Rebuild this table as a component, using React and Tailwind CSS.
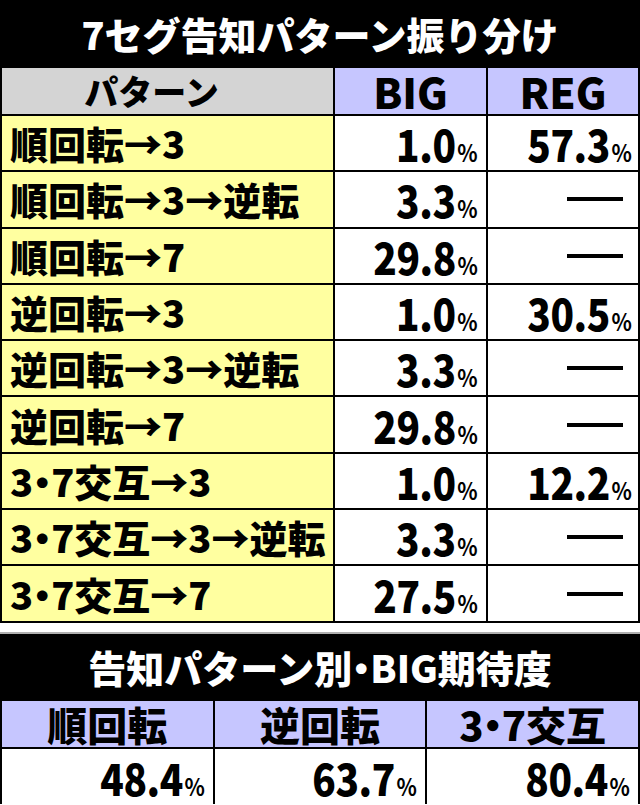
import React from "react";

const rows = [
  { label: "順回転→3", big: "1.0", reg: "57.3" },
  { label: "順回転→3→逆転", big: "3.3", reg: null },
  { label: "順回転→7", big: "29.8", reg: null },
  { label: "逆回転→3", big: "1.0", reg: "30.5" },
  { label: "逆回転→3→逆転", big: "3.3", reg: null },
  { label: "逆回転→7", big: "29.8", reg: null },
  { label: "3・7交互→3", big: "1.0", reg: "12.2" },
  { label: "3・7交互→3→逆転", big: "3.3", reg: null },
  { label: "3・7交互→7", big: "27.5", reg: null },
];

const expect = [
  { label: "順回転", value: "48.4" },
  { label: "逆回転", value: "63.7" },
  { label: "3・7交互", value: "80.4" },
];

// 中黒は幅を詰めて表示
function Dot() {
  return <span className="inline-flex w-[18px] justify-center overflow-hidden">・</span>;
}

function Label({ text }) {
  const parts = text.split("・");
  if (parts.length === 1) return text;
  return (
    <>
      {parts[0]}
      <Dot />
      {parts[1]}
    </>
  );
}

function Percent({ value }) {
  return (
    <span className="flex items-baseline leading-none origin-right scale-x-[0.88]">
      <span className="text-[44px] font-black tracking-[-0.5px]">{value}</span>
      <span className="text-[24px] font-bold ml-[2px]">%</span>
    </span>
  );
}

function Dash() {
  return <div className="w-[56px] h-[4px] bg-black" />;
}

export default function App() {
  return (
    <div
      className="w-[640px] h-[805px] bg-white overflow-hidden text-black"
      style={{ fontFamily: '"Noto Sans CJK JP", "Noto Sans", sans-serif' }}
    >
      {/* タイトル */}
      <div className="h-[68px] bg-black flex items-center justify-center text-white text-[38px] font-black leading-none">
        7セグ告知パターン振り分け
      </div>

      {/* 振り分け表 */}
      <div className="grid grid-cols-[331px_151px_1fr] gap-[2px] bg-black px-[2px] pb-[2px]">
        <div className="h-[46px] bg-[#d4d4d4] flex items-center justify-center pr-8 text-[34px] font-black leading-none">
          パターン
        </div>
        <div className="h-[46px] bg-[#c6c6ff] flex items-center justify-center text-[42px] font-black leading-none">
          BIG
        </div>
        <div className="h-[46px] bg-[#c6c6ff] flex items-center justify-center text-[42px] font-black leading-none">
          REG
        </div>

        {rows.map((r) => (
          <React.Fragment key={r.label}>
            <div className="h-[54.3px] bg-[#ffffa0] flex items-center pl-2 text-[38px] font-black leading-none whitespace-nowrap">
              <Label text={r.label} />
            </div>
            <div className="h-[54.3px] bg-white flex items-center justify-end pr-2">
              <Percent value={r.big} />
            </div>
            <div className="h-[54.3px] bg-white flex items-center justify-end pr-[6px]">
              {r.reg ? <Percent value={r.reg} /> : <div className="pr-[9px]"><Dash /></div>}
            </div>
          </React.Fragment>
        ))}
      </div>

      {/* 区切り */}
      <div className="h-[9px] bg-white" />
      <div className="h-[2px] bg-[#b0b0b0]" />

      {/* BIG期待度 */}
      <div className="h-[67px] bg-black flex items-center justify-center text-white text-[38px] font-black leading-none">
        告知パターン別<Dot />BIG期待度
      </div>
      <div className="grid grid-cols-3 gap-[2px] bg-black px-[2px]">
        {expect.map((e) => (
          <div
            key={e.label}
            className="h-[46px] bg-[#c6c6ff] flex items-center justify-center text-[40px] font-black leading-none"
          >
            <Label text={e.label} />
          </div>
        ))}
        {expect.map((e) => (
          <div key={e.value} className="h-[55px] bg-white flex items-center justify-end pr-2 pt-[2px]">
            <Percent value={e.value} />
          </div>
        ))}
      </div>
    </div>
  );
}
